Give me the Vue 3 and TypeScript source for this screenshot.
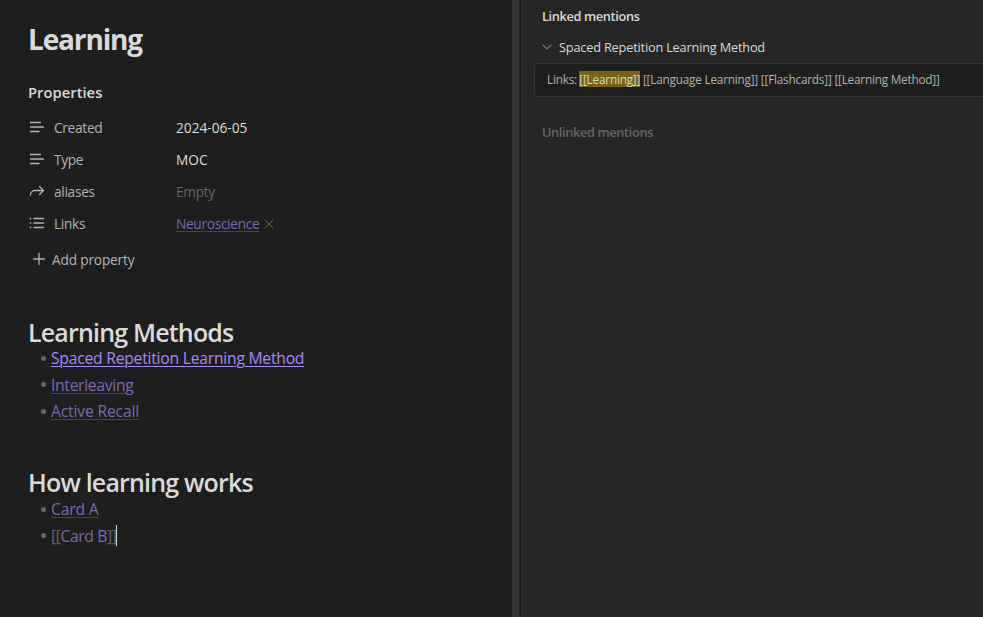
<script setup lang="ts">
interface Property {
  key: string
  value: string
  icon: 'text' | 'alias' | 'list'
  kind: 'plain' | 'empty' | 'link'
}

interface Section {
  title: string
  cls: string
  items: { label: string; cls: string; state: 'resolved' | 'unresolved' | 'editing' }[]
}

const properties: Property[] = [
  { key: 'Created', value: '2024-06-05', icon: 'text', kind: 'plain' },
  { key: 'Type', value: 'MOC', icon: 'text', kind: 'plain' },
  { key: 'aliases', value: 'Empty', icon: 'alias', kind: 'empty' },
  { key: 'Links', value: 'Neuroscience', icon: 'list', kind: 'link' },
]

const sections: Section[] = [
  {
    title: 'Learning Methods',
    cls: 'methods',
    items: [
      { label: 'Spaced Repetition Learning Method', cls: 'spaced', state: 'resolved' },
      { label: 'Interleaving', cls: 'inter', state: 'unresolved' },
      { label: 'Active Recall', cls: 'recall', state: 'unresolved' },
    ],
  },
  {
    title: 'How learning works',
    cls: 'works',
    items: [
      { label: 'Card A', cls: 'card', state: 'unresolved' },
      { label: 'Card B', cls: 'card', state: 'editing' },
    ],
  },
]
</script>

<template>
  <div class="workspace">
    <main class="note">
      <h1>Learning</h1>
      <h3>Properties</h3>
      <div v-for="p in properties" :key="p.key" class="row">
        <svg v-if="p.icon === 'text'" class="icon" viewBox="0 0 16 16">
          <path d="M1.500 3.500h10M1.500 8h13M1.500 12.500h8.500" />
        </svg>
        <svg v-else-if="p.icon === 'alias'" class="icon" viewBox="0 0 16 16">
          <path d="M10.500 3.500l4 4-4 4M14.200 7.500H6a4.600 4.600 0 0 0-4.600 4.600" />
        </svg>
        <svg v-else class="icon" viewBox="0 0 16 16">
          <path d="M5 3.500h9.500M5 8h9.500M5 12.500h9.500M1.200 3.500h.6M1.200 8h.6M1.200 12.500h.6" />
        </svg>
        <span class="key">{{ p.key }}</span>
        <span class="value" :class="p.kind">{{ p.value }}</span>
        <svg v-if="p.kind === 'link'" class="remove" viewBox="0 0 10 10">
          <path d="M1.200 1.200l7.600 7.600M8.800 1.200L1.200 8.800" />
        </svg>
      </div>
      <div class="add">
        <svg class="plus" viewBox="0 0 14 14"><path d="M1.500 7h11M7 1.500v11" /></svg>
        <span>Add property</span>
      </div>
      <section v-for="s in sections" :key="s.title" :class="s.cls">
        <h2>{{ s.title }}</h2>
        <ul>
          <li v-for="i in s.items" :key="i.label">
            <span class="bullet"></span>
            <span v-if="i.state === 'editing'" class="editing"><span class="bracket">[[</span><span class="target">{{ i.label }}</span><span class="bracket">]]</span></span>
            <a v-else :class="[i.state, i.cls]">{{ i.label }}</a>
            <span v-if="i.state === 'editing'" class="caret"></span>
          </li>
        </ul>
      </section>
    </main>
    <div class="scroll"></div>
    <div class="gap"></div>
    <aside class="side">
      <div class="head">Linked mentions</div>
      <div class="file">
        <svg class="chevron" viewBox="0 0 12 8"><path d="M2 2l4 4 4-4" /></svg>
        <span>Spaced Repetition Learning Method</span>
      </div>
      <div class="match">Links: <mark>[[Learning]]</mark> [[Language Learning]] [[Flashcards]] [[Learning Method]]</div>
      <div class="head muted">Unlinked mentions</div>
    </aside>
  </div>
</template>

<style>
body {
  background: #1e1e1e;
}
</style>

<style scoped>
.workspace {
  display: flex;
  height: 617px;
  overflow: hidden;
  background: #1e1e1e;
  color: #dadada;
  font-family: 'Open Sans', 'Noto Sans', sans-serif;
  white-space: nowrap;
}
.note {
  box-sizing: border-box;
  width: 512px;
  flex: none;
  padding: 19px 0 0 28px;
}
h1,
h2,
h3,
ul {
  margin: 0;
  padding: 0;
}
h1 {
  font-size: 28px;
  font-weight: 700;
  line-height: 40px;
  letter-spacing: -1.15px;
}
h3 {
  margin-top: 21px;
  font-size: 14.8px;
  font-weight: 600;
  line-height: 24px;
  margin-bottom: 7px;
}
.row {
  display: flex;
  align-items: center;
  height: 32px;
  font-size: 13.7px;
}
svg {
  display: block;
  flex: none;
  fill: none;
  stroke: #b3b3b3;
  stroke-width: 1.3;
  stroke-linecap: round;
  stroke-linejoin: round;
}
.icon {
  width: 16px;
  height: 16px;
  margin: 0 9px 0 1px;
}
.key {
  width: 122px;
  color: #b3b3b3;
  letter-spacing: -0.3px;
}
.empty {
  color: #666;
  letter-spacing: -0.3px;
}
.link {
  letter-spacing: -0.31px;
}
.link,
.unresolved {
  color: #7d69b5;
  text-decoration: underline 1px #4a3b70;
  text-underline-offset: 2px;
}
.remove {
  width: 10px;
  height: 10px;
  margin: 1px 0 0 5px;
  stroke: #666;
  stroke-width: 1;
}
.add {
  display: flex;
  align-items: center;
  height: 24px;
  margin-top: 8px;
  padding-left: 4px;
  font-size: 13.7px;
  letter-spacing: -0.18px;
  color: #b3b3b3;
}
.plus {
  width: 14px;
  height: 14px;
  margin-right: 6px;
}
h2 {
  font-size: 25px;
  font-weight: 600;
  line-height: 25px;
  letter-spacing: -0.82px;
}
.methods {
  margin-top: 49px;
}
.works {
  margin-top: 45px;
}
.works ul {
  padding-top: 1px;
}
li {
  display: flex;
  align-items: center;
  height: 26.6px;
  padding-left: 13px;
  font-size: 15.7px;
}
.bullet {
  width: 5px;
  height: 5px;
  margin-right: 5px;
  border-radius: 50%;
  background: #666;
}
.resolved {
  color: #a68af9;
  text-decoration: underline 1px;
  text-underline-offset: 2px;
}
.spaced {
  letter-spacing: -0.24px;
}
.inter {
  letter-spacing: -0.32px;
}
.recall,
.card {
  letter-spacing: -0.18px;
}
.editing {
  letter-spacing: -0.39px;
}
.bracket {
  color: #666;
}
.target {
  color: #7d69b5;
}
.caret {
  width: 1px;
  height: 21px;
  background: #dadada;
}
.scroll {
  width: 7px;
  flex: none;
  background: #363636;
}
.gap {
  width: 3px;
  flex: none;
  background: #1e1e1e;
}
.side {
  box-sizing: border-box;
  flex: 1;
  min-width: 0;
  padding: 4px 0 0 11px;
  overflow: hidden;
  border-left: 1px solid #363636;
  background: #262626;
}
.head {
  padding-left: 8px;
  font-size: 12.75px;
  font-weight: 600;
  line-height: 24px;
  letter-spacing: -0.35px;
}
.file {
  display: flex;
  align-items: center;
  height: 24px;
  margin-top: 7px;
  padding-left: 7px;
  font-size: 12.75px;
  letter-spacing: -0.19px;
}
.chevron {
  width: 12px;
  height: 8px;
  margin-right: 6px;
  stroke: #777;
}
.match {
  box-sizing: border-box;
  height: 34px;
  margin-top: 4px;
  padding-left: 12px;
  border: 1px solid #363636;
  border-right: 0;
  border-radius: 4px 0 0 4px;
  background: #1e1e1e;
  color: #b3b3b3;
  font-size: 11.75px;
  line-height: 30px;
  letter-spacing: -0.2px;
}
mark {
  margin-left: -0.5px;
  background: #7a6210;
  color: #dadada;
}
.muted {
  margin-top: 23px;
  color: #666;
}
</style>
